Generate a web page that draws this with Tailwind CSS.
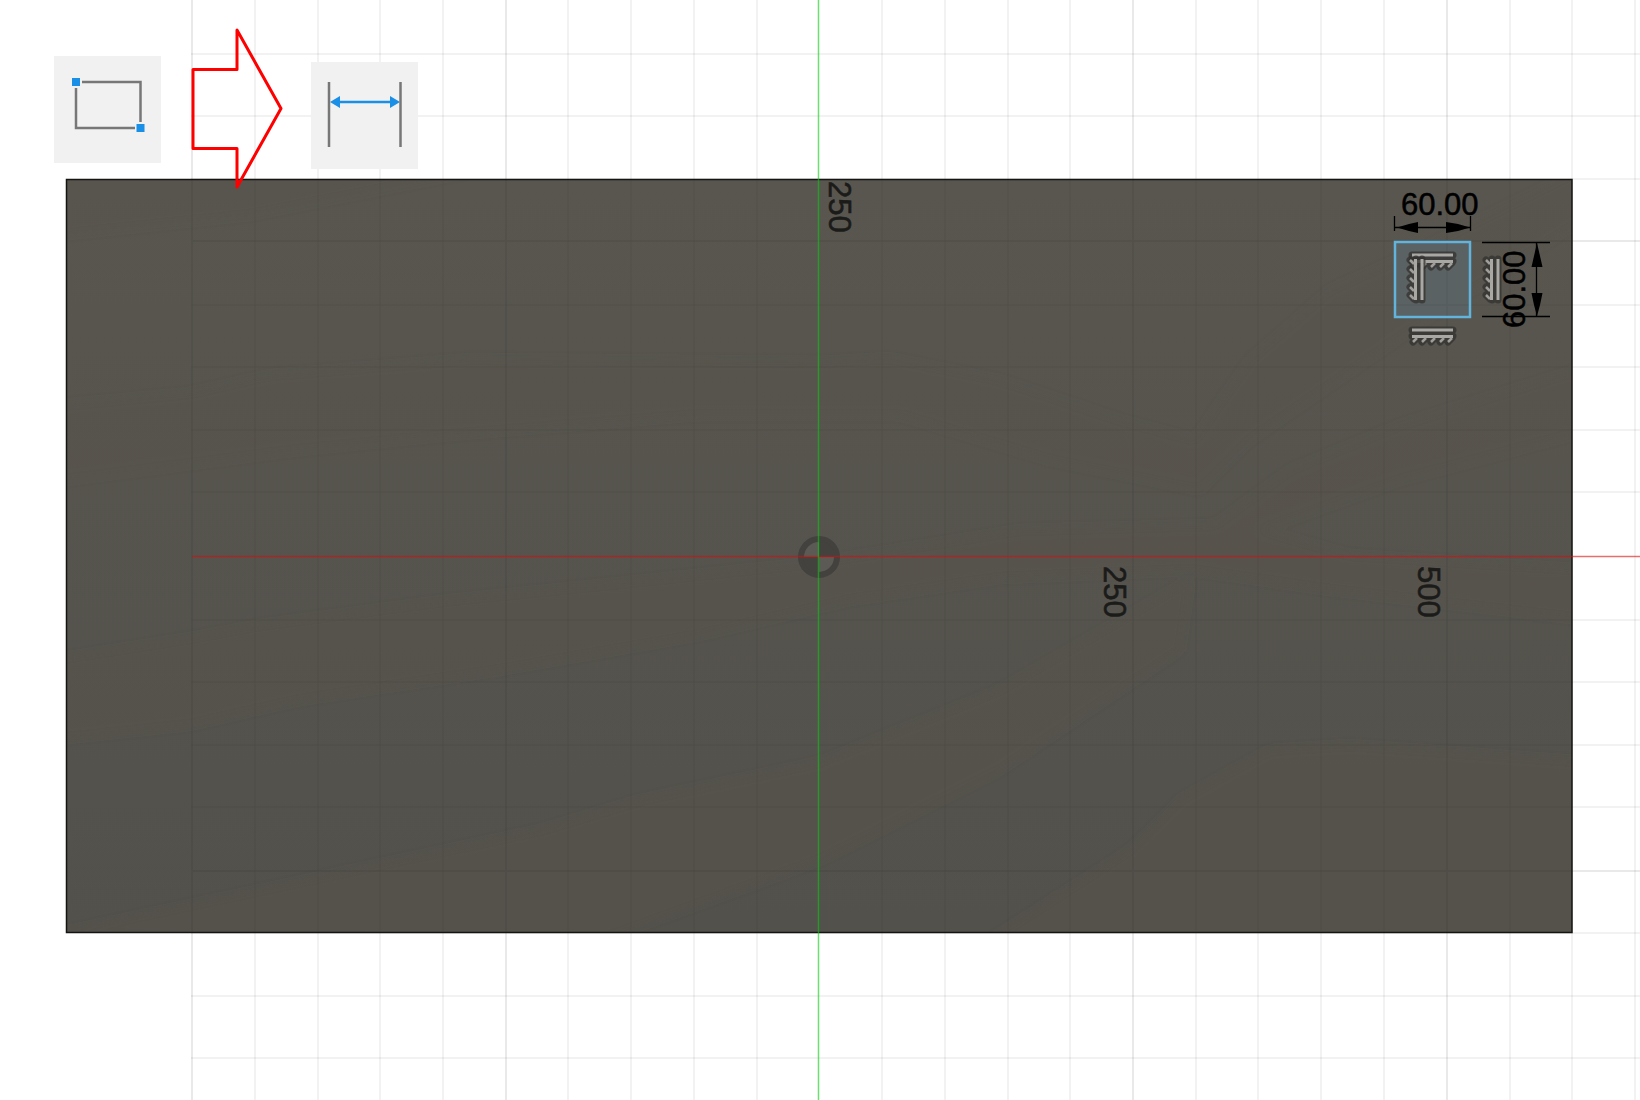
<!DOCTYPE html>
<html lang="en">
<head>
<meta charset="utf-8">
<title>Sketch</title>
<script src="https://cdn.jsdelivr.net/npm/@tailwindcss/browser@4"></script>
</head>
<body class="bg-white">
<main class="relative w-full overflow-hidden">
  <svg class="block h-auto w-full" viewBox="0 0 1640 1100" role="img" aria-label="Sketch canvas">
    <defs>
      <clipPath id="board"><rect x="67" y="180" width="1505" height="752"/></clipPath>
      <filter id="soft"><feGaussianBlur stdDeviation="5"/></filter>
      <linearGradient id="shade" x1="0" y1="0" x2="0" y2="1">
        <stop offset="0" stop-color="#58564f"/><stop offset="1" stop-color="#53514b"/>
      </linearGradient>
      <g id="grid" fill="none" stroke="#000" stroke-width="2">
        <path stroke-opacity=".05" d="M255 0V1100M318 0V1100M380 0V1100M443 0V1100M568 0V1100M631 0V1100M694 0V1100M757 0V1100M882 0V1100M945 0V1100M1008 0V1100M1070 0V1100M1196 0V1100M1258 0V1100M1321 0V1100M1384 0V1100M1510 0V1100M1572 0V1100M1635 0V1100"/>
        <path stroke-opacity=".05" d="M191 54H1640M191 116H1640M191 179H1640M191 305H1640M191 367H1640M191 430H1640M191 492H1640M191 620H1640M191 682H1640M191 745H1640M191 807H1640M191 933H1640M191 996H1640M191 1058H1640"/>
        <path stroke-opacity=".085" d="M192 0V1100M506 0V1100M1133 0V1100M1447 0V1100M191 241H1640M191 871H1640"/>
      </g>
      <g id="hatch">
        <path d="M0 1H41M0 7H41M1 13L5 9M10 13L14 9M19 13L23 9M28 13L32 9M36 13L40 9" fill="none" stroke="#33322f" stroke-opacity=".75" stroke-width="7" stroke-linejoin="round" stroke-linecap="round"/>
        <path d="M0 1H41" stroke="#aaa8a5" stroke-width="3"/>
        <path d="M0 7.500H41" stroke="#aaa8a5" stroke-width="3"/>
        <path d="M1 13L5 9M10 13L14 9M19 13L23 9M28 13L32 9M36 13L40 9" fill="none" stroke="#a09e9a" stroke-width="2.500"/>
      </g>
    </defs>

    <use href="#grid"/>

    <!-- board face -->
    <rect x="66.500" y="179.500" width="1505.500" height="753" fill="url(#shade)"/>
    <g clip-path="url(#board)">
      <g filter="url(#soft)" fill="#5a5049" fill-opacity=".28">
        <path d="M50 170H480L250 215L50 236Z"/>
        <path d="M50 406L190 393L270 375L470 359L820 362L890 358L1000 380L1120 420L1195 440L1215 410L1250 360L1330 290L1420 250L1590 165V215L1440 310L1250 440L1200 490L1050 460L900 415L700 415L450 435L300 450L50 482Z"/>
        <path d="M1590 366L1400 425L1290 470L1215 525L1020 530L820 562L600 585L450 600L260 625L190 638L50 660V740L190 725L300 700L500 670L700 635L850 600L1000 578L1190 570L1330 590L1590 620V570L1350 555L1260 530L1400 480L1590 430Z"/>
        <path d="M50 935L190 905L330 875L540 830L640 800L820 762L1000 690L1190 580L1180 650L1000 770L820 860L600 940Z"/>
        <path d="M990 940L1130 850L1180 800L1270 750L1350 745L1590 762V940Z"/>
      </g>
      <use href="#grid" opacity=".6"/>
    </g>
    <rect x="66.500" y="179.500" width="1505.500" height="753" fill="none" stroke="#141413" stroke-width="1.500"/>

    <!-- origin -->
    <circle cx="819" cy="557" r="18" fill="#5c5a54" stroke="#43423e" stroke-width="6"/>
    <path d="M819 557V541A16 16 0 0 1 835 557ZM819 557V573A16 16 0 0 1 803 557Z" fill="#43423e"/>
    <path d="M192 556.500H1640" stroke="#d90d0d" stroke-opacity=".6" stroke-width="1.500"/>
    <path d="M818.500 0V1100" stroke="#06cc10" stroke-opacity=".6" stroke-width="1.500"/>

    <g font-family="'Liberation Sans', Arial, sans-serif" font-size="31" fill="#1b1b19" stroke="#1b1b19" stroke-width=".6">
      <text transform="translate(829 181) rotate(90)">250</text>
      <text transform="translate(1104 566) rotate(90)">250</text>
      <text transform="translate(1418 566) rotate(90)">500</text>
    </g>

    <!-- constrained square -->
    <rect x="1395" y="242" width="75" height="75" fill="#5b6263" stroke="#62b4dc" stroke-width="2.500"/>
    <path d="M1447 243V316M1396 305H1469" stroke="#000" stroke-opacity=".04" stroke-width="2"/>
    <use href="#hatch" transform="translate(1412 254)"/>
    <use href="#hatch" transform="translate(1423 259) rotate(90)"/>
    <use href="#hatch" transform="translate(1499 259) rotate(90)"/>
    <use href="#hatch" transform="translate(1412 329)"/>

    <!-- dimensions -->
    <path d="M1394.500 216V231M1470.500 216V231M1395 227.500H1470M1482 242.500H1550M1482 316.500H1550M1536.500 243V316" fill="none" stroke="#000" stroke-width="1.300"/>
    <path d="M1397 227.500L1409 224L1418 222V233L1409 231ZM1470 227.500L1458 224L1446 222V233L1458 231ZM1537 243L1540 256L1542.500 267H1531.500L1534 256ZM1537 316L1540 305L1542.500 293H1531.500L1534 305Z"/>
    <g font-family="'Liberation Sans', Arial, sans-serif" font-size="31" fill="#000" stroke="#000" stroke-width=".5">
      <text x="1401" y="215">60.00</text>
      <text transform="translate(1525 328) rotate(-90)">60.00</text>
    </g>
  </svg>

  <!-- tool sequence laid over the canvas -->
  <div class="absolute inset-x-0 top-0 flex items-center gap-7 pt-[27px] pl-[54px]">
    <button type="button" aria-label="Rectangle" class="size-[107px] shrink-0 bg-[#f1f1f1]">
      <svg class="block size-full" viewBox="0 0 107 107" fill="none">
        <path d="M28 26H86.500V66M22 32V72H81" stroke="#777" stroke-width="2.500"/>
        <path d="M18 22h8v8h-8zM82.500 68h8v8h-8z" fill="#1a8fe8"/>
      </svg>
    </button>
    <svg class="h-[164px] w-[94px] shrink-0" viewBox="0 0 94 164" fill="none" aria-hidden="true">
      <path d="M4 42.500H48V3L92 81.500L48 160V121.500H4Z" stroke="#f00" stroke-width="3" stroke-linejoin="round"/>
    </svg>
    <button type="button" aria-label="Dimension" class="mt-3 size-[107px] shrink-0 bg-[#f1f1f1]">
      <svg class="block size-full" viewBox="0 0 107 107" fill="none">
        <path d="M18 20V85M89.500 20V85" stroke="#777" stroke-width="2.500"/>
        <path d="M26 40H82" stroke="#1a8fe8" stroke-width="2.500"/>
        <path d="M19 40L29 34V46ZM89 40L79 34V46Z" fill="#1a8fe8"/>
      </svg>
    </button>
  </div>
</main>
</body>
</html>
